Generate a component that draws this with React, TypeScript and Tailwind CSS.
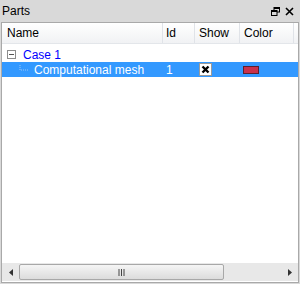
import React from "react";

export default function App() {
  const font = { fontFamily: '"Liberation Sans", "Noto Sans", sans-serif' };
  return (
    <div className="w-[300px] h-[284px] bg-[#d9d9d9] flex flex-col text-[12px] text-black" style={font}>
      {/* Title bar */}
      <div className="h-[22px] flex items-center px-[2px] shrink-0">
        <span className="leading-none text-[12px]">Parts</span>
        <div className="ml-auto flex items-center gap-[5px] pr-[4px]">
          <svg width="9" height="9" viewBox="0 0 9 9">
            <rect x="3" y="0.5" width="5.5" height="4.5" fill="none" stroke="#000" strokeWidth="1" />
            <rect x="3" y="0.5" width="5.5" height="1.5" fill="#000" />
            <rect x="0.5" y="3.5" width="5.5" height="5" fill="#d9d9d9" stroke="#000" strokeWidth="1" />
            <rect x="0.5" y="3.5" width="5.5" height="1.5" fill="#000" />
          </svg>
          <svg width="9" height="9" viewBox="0 0 9 9">
            <path d="M1 1 L8 8 M8 1 L1 8" stroke="#000" strokeWidth="1.6" />
          </svg>
        </div>
      </div>
      {/* Panel */}
      <div className="flex-1 mx-[1px] mb-[1px] border border-[#a9a9a9] bg-white flex flex-col min-h-0">
        {/* Header */}
        <div className="h-[21px] flex items-stretch bg-gradient-to-b from-[#ffffff] to-[#f1f2f4] border-b border-[#e3e6ea] shrink-0">
          <div className="w-[161px] flex items-center pl-[5px] border-r border-[#e0e3e8]">Name</div>
          <div className="w-[32px] flex items-center pl-[3px] border-r border-[#e0e3e8]">Id</div>
          <div className="w-[45px] flex items-center pl-[4px] border-r border-[#e0e3e8]">Show</div>
          <div className="w-[54px] flex items-center pl-[4px] border-r border-[#e0e3e8]">Color</div>
          <div className="flex-1"></div>
        </div>
        {/* Rows */}
        <div className="flex-1 flex flex-col pt-[3px]">
          <div className="h-[15px] flex items-center">
            <div className="w-[16px] flex items-center justify-center pl-[2px]">
              <svg width="9" height="9" viewBox="0 0 9 9">
                <rect x="0.5" y="0.5" width="8" height="8" fill="#fff" stroke="#8c8c8c" />
                <path d="M2 4.5 H7" stroke="#555" />
              </svg>
            </div>
            <span className="text-[#0000ff] pl-[5px]">Case 1</span>
          </div>
          <div className="h-[15px] flex items-center bg-[#3399ff] text-white">
            <div className="w-[161px] flex items-center pl-[17px]">
              <svg width="10" height="10" viewBox="0 0 10 10" className="mr-[5px]">
                <path d="M1 0 V5 H10" stroke="#9cc7f5" strokeDasharray="1 1" fill="none" />
              </svg>
              <span>Computational mesh</span>
            </div>
            <div className="w-[32px] pl-[3px]">1</div>
            <div className="w-[45px] flex items-center pl-[4px]">
              <div className="w-[13px] h-[13px] bg-white border border-[#9a9a9a] flex items-center justify-center">
                <svg width="9" height="9" viewBox="0 0 9 9">
                  <path d="M1.5 1.5 L7.5 7.5 M7.5 1.5 L1.5 7.5" stroke="#000" strokeWidth="2.4" />
                </svg>
              </div>
            </div>
            <div className="w-[54px] flex items-center pl-[3px]">
              <div className="w-[16px] h-[8px] bg-[#c8314b] border border-[#5a2030]"></div>
            </div>
            <div className="flex-1"></div>
          </div>
        </div>
        {/* Horizontal scrollbar */}
        <div className="h-[18px] bg-[#e8e8e8] flex items-center shrink-0 mb-[1px]">
          <div className="w-[17px] flex items-center justify-center">
            <svg width="4" height="7" viewBox="0 0 4 7"><path d="M4 0 L0 3.5 L4 7 Z" fill="#333" /></svg>
          </div>
          <div className="w-[205px] h-[16px] rounded-[2px] border border-[#a8a8a8] bg-gradient-to-b from-[#f5f5f5] to-[#dcdcdc] flex items-center justify-center">
            <svg width="8" height="7" viewBox="0 0 8 7">
              <path d="M1 0 V7 M3.5 0 V7 M6 0 V7" stroke="#444" strokeWidth="1" />
            </svg>
          </div>
          <div className="flex-1"></div>
          <div className="w-[17px] flex items-center justify-center">
            <svg width="4" height="7" viewBox="0 0 4 7"><path d="M0 0 L4 3.5 L0 7 Z" fill="#333" /></svg>
          </div>
        </div>
      </div>
    </div>
  );
}
